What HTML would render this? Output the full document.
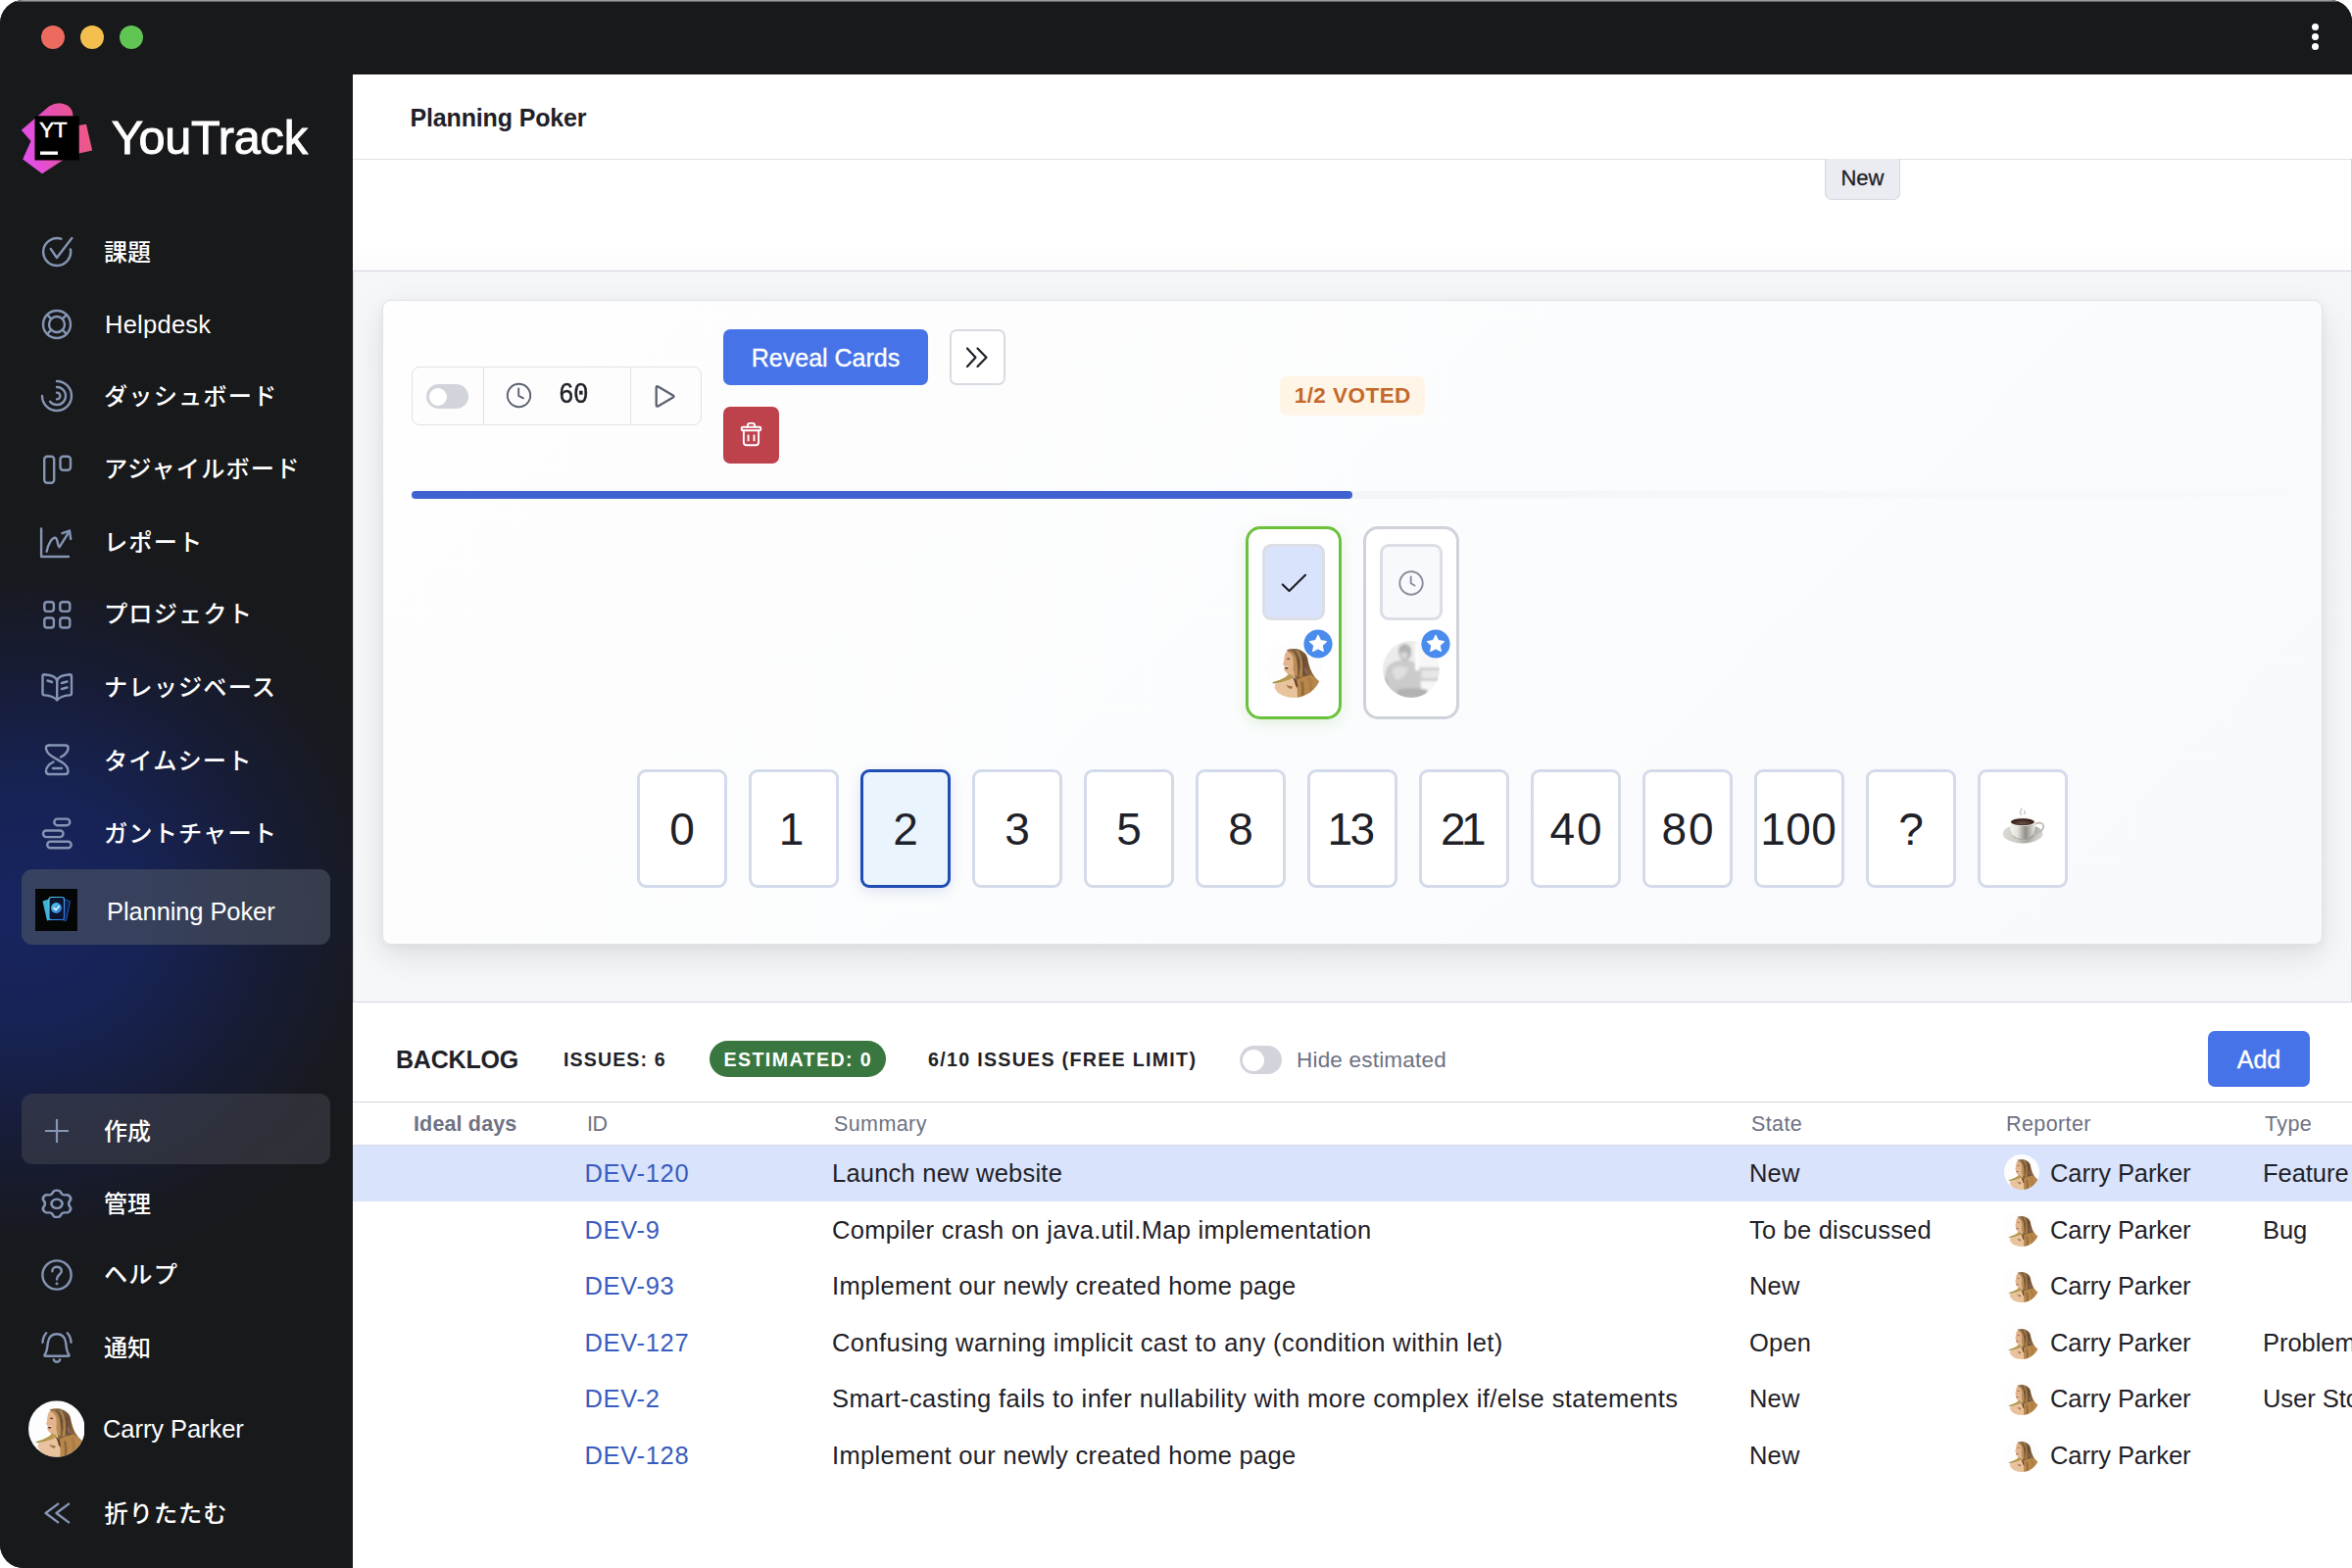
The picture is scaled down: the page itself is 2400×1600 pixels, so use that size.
<!DOCTYPE html>
<html lang="ja">
<head>
<meta charset="utf-8">
<title>Planning Poker - YouTrack</title>
<style>
*{box-sizing:border-box;margin:0;padding:0}
html,body{width:2400px;height:1600px;overflow:hidden;background:#fff}
body{font-family:"Liberation Sans","Noto Sans CJK JP",sans-serif;color:#1f2128;-webkit-font-smoothing:antialiased}
.win{position:absolute;left:0;top:0;width:2400px;height:1600px;background:#18191b;border-radius:24px 22px 0 24px;overflow:hidden;}
.win::before{content:'';position:absolute;left:0;top:0;width:100%;height:2px;background:linear-gradient(180deg,#b0b0b0 0%,#8a8a8a 50%,#3a3a3c 100%);z-index:9}
.titlebar{position:absolute;left:0;top:0;width:2400px;height:76px;background:#18191b}
.tl{position:absolute;top:26px;width:24px;height:24px;border-radius:50%}
.kebab{position:absolute;left:2358px;top:24px;width:8px}
.kebab i{display:block;width:7px;height:7px;border-radius:50%;background:#fff;margin:0 0 3px 0.5px}
.abs{position:absolute}
.side{position:absolute;left:0;top:76px;width:360px;height:1524px;background:#18191b;overflow:hidden}
.side .glow{position:absolute;left:-410px;top:440px;width:870px;height:820px;background:radial-gradient(closest-side,rgba(23,37,100,.95) 0%,rgba(23,36,94,.85) 30%,rgba(22,31,76,.5) 60%,rgba(22,27,50,.18) 82%,rgba(24,25,27,0) 100%)}
.nav{position:absolute;left:107px;height:32px;line-height:32px;font-size:24.6px;font-weight:500;color:#fff;white-space:nowrap}
.ico{position:absolute;left:41.5px;width:32px;height:32px;overflow:visible}
.ico *{fill:none;stroke:#8595b3;stroke-width:2.4;stroke-linecap:round;stroke-linejoin:round}
.hl{position:absolute;left:22px;width:315px;border-radius:11px;background:rgba(255,255,255,.13)}
.main{position:absolute;left:360px;top:76px;width:2040px;height:1524px;background:#fff;overflow:hidden}
.main .in{position:absolute;left:-360px;top:-76px;width:2400px;height:1600px}
.hline{position:absolute;left:360px;width:2040px;height:1px}
.gray{position:absolute;left:360px;top:277px;width:2040px;height:745px;background:linear-gradient(180deg,#f5f6f8 0%,#f6f7f9 100%);border-left:1px solid #d9dbe3}
.pcard{position:absolute;left:390px;top:306px;width:1980px;height:658px;border:1px solid #e1e3ea;border-radius:9px;background:linear-gradient(135deg,#fefefe 0%,#fbfcfd 50%,#f8f9fc 100%);box-shadow:0 12px 32px rgba(22,24,34,.10),0 3px 8px rgba(22,24,34,.04)}
.btn{position:absolute;border-radius:7px;color:#fff;text-align:center;white-space:nowrap}
.card{position:absolute;top:785px;width:92px;height:121px;border:3px solid #d3dbea;border-radius:9px;background:#fff;text-align:center;font-size:46px;line-height:116px;color:#1f2128;letter-spacing:0}
.card.sel{border-color:#1f4db3;background:#e9f4fd;box-shadow:0 4px 14px rgba(40,80,180,.14)}
.bl{position:absolute;white-space:nowrap}
.cap{font-weight:700;color:#1f2128;letter-spacing:1.2px}
.th{position:absolute;top:1132px;font-size:21.5px;letter-spacing:0.4px;line-height:30px;color:#6e7283;white-space:nowrap}
.row{position:absolute;left:360px;width:2040px;height:57px}
.td{position:absolute;font-size:25.5px;letter-spacing:0.2px;line-height:34px;color:#1f2128;white-space:nowrap}
.td.id{color:#3a5cc0}
.nav.kj{font-size:24px}
.nav.kt{font-size:24.2px;letter-spacing:1.3px}
.nav.kj,.nav.kt{margin-top:-0.7px;margin-left:-1px}
.nav.kt{letter-spacing:1.15px}

</style>
</head>
<body>
<div class="win">
<div class="titlebar">
  <span class="tl" style="left:42px;background:#ed6a5e"></span>
  <span class="tl" style="left:82px;background:#f5bf4f"></span>
  <span class="tl" style="left:122px;background:#61c554"></span>
  <span class="kebab"><i></i><i></i><i></i></span>
</div>
<div class="side">
<div class="glow"></div>
<div id="sb" style="position:absolute;left:0;top:-76px;width:360px;height:1600px">
<!-- logo -->
<svg class="abs" style="left:20px;top:102px" width="78" height="78" viewBox="0 0 78 78">
  <defs><linearGradient id="lg1" x1="0" y1="0.6" x2="1" y2="0.4"><stop offset="0" stop-color="#e24ef0"/><stop offset="0.55" stop-color="#e650a8"/><stop offset="1" stop-color="#ee5a80"/></linearGradient></defs>
  <path d="M1.8 30.8 L30 6.5 Q40.5 0.5 49.5 6 Q56 11 54 20 L54 27 L68 24.8 L74.2 51.5 L60.7 54.5 L44 61.5 L23 75.2 L3.2 60.5 L11.5 42 Z" fill="url(#lg1)"/>
  <rect x="15.5" y="16.3" width="45.2" height="45.2" fill="#000"/>
  <rect x="21" y="52.5" width="18" height="3.4" fill="#fff"/>
  <text x="20.2" y="37.6" font-family="Liberation Sans, sans-serif" font-size="22.5" fill="#fff" stroke="#fff" stroke-width="0.55" letter-spacing="-0.4">YT</text>
</svg>
<div class="abs" style="left:113.7px;top:109.8px;font-size:48.5px;line-height:60px;color:#fff;letter-spacing:-0.15px;-webkit-text-stroke:1px #fff">YouTrack</div>

<!-- nav icons -->
<svg class="ico" style="top:241px" viewBox="0 0 32 32"><path d="M20.4 2.7A14 14 0 1 0 29.9 13.4"/><path d="M9.7 12.9L16 22L31.3 2"/></svg>
<div class="nav kj" style="top:242.5px">課題</div>

<svg class="ico" style="top:315px" viewBox="0 0 32 32"><circle cx="16" cy="16" r="14"/><circle cx="16" cy="16" r="8"/><path d="M6.1 6.1L10.3 10.3M25.9 6.1L21.7 10.3M6.1 25.9L10.3 21.7M25.9 25.9L21.7 21.7"/></svg>
<div class="nav" style="top:315px;font-size:25.5px;font-weight:400;letter-spacing:0.25px">Helpdesk</div>

<svg class="ico" style="top:388px" viewBox="0 0 32 32"><path d="M16 1A15 15 0 1 1 1 16"/><path d="M16 7A9 9 0 1 1 9 21.7"/><path d="M16 12.6A3.4 3.4 0 0 1 16 19.4"/></svg>
<div class="nav kt" style="top:389.5px">ダッシュボード</div>

<svg class="ico" style="top:463px" viewBox="0 0 32 32"><rect x="3.2" y="2.7" width="10" height="27" rx="3"/><rect x="19.5" y="2.7" width="10.5" height="14" rx="3"/></svg>
<div class="nav kt" style="top:463.6px">アジャイルボード</div>

<svg class="ico" style="top:537px;left:40.3px" viewBox="0 0 32 32"><path d="M2.1 2.5V31H30"/><path d="M7.6 25.8C9 18 13 11.5 16.3 11.8C19.5 12.3 18 19.5 20.5 21.3L31 4.8"/><path d="M23.5 7.2L31 4.6L32.2 13"/></svg>
<div class="nav kt" style="top:538.8px">レポート</div>

<svg class="ico" style="top:611px" viewBox="0 0 32 32"><rect x="3.3" y="3.3" width="9.6" height="9.6" rx="2.8"/><rect x="19.3" y="3.3" width="10" height="9.6" rx="2.8"/><rect x="3.3" y="19.5" width="9.6" height="10" rx="2.8"/><rect x="19.3" y="19.5" width="10" height="10" rx="2.8"/></svg>
<div class="nav kt" style="top:612.1px">プロジェクト</div>

<svg class="ico" style="top:685px" viewBox="0 0 32 32"><path d="M16.2 29V10.5C16.2 5.5 10 3.8 3.3 3.2Q1.5 3.2 1.5 5V22.5Q1.5 24.3 3.3 24.4C9 24.8 13.5 26 16.2 29.5C19 26 23.5 24.8 29.2 24.4Q31 24.3 31 22.5V5Q31 3.2 29.2 3.2C22.5 3.8 16.2 5.5 16.2 10.5"/><path d="M6.5 9.5L11 11M21 12L26.5 10.5M21 18L26.5 16.5"/></svg>
<div class="nav kt" style="top:687.1px">ナレッジベース</div>

<svg class="ico" style="top:759px" viewBox="0 0 32 32"><path d="M8 1.5H24.5Q28 1.5 27.5 5C27 9 24 11.5 20 13.5"/><path d="M8 1.5Q4.5 1.5 5 5C6 12 15 14.5 21.5 19C26 22 27.5 25 27.5 28Q27.5 31 24.5 31H8Q5 31 5 28C5 24 7.5 21 12.5 18.5"/><path d="M12 25H21"/></svg>
<div class="nav kt" style="top:761.2px">タイムシート</div>

<svg class="ico" style="top:833px" viewBox="0 0 32 32"><rect x="13.3" y="2.6" width="16" height="6.6" rx="3.3"/><rect x="2" y="14.5" width="20.5" height="6.6" rx="3.3"/><rect x="6.2" y="25.7" width="24.5" height="6.6" rx="3.3"/></svg>
<div class="nav kt" style="top:836.1px">ガントチャート</div>

<div class="hl" style="top:887px;height:77px;background:rgba(77,85,98,.6)"></div>
<svg class="abs" style="left:36px;top:907px" width="43" height="43" viewBox="0 0 43 43">
  <defs><linearGradient id="pg1" x1="0" y1="0" x2="1" y2="1"><stop offset="0" stop-color="#52d6e8"/><stop offset="1" stop-color="#2f6fe0"/></linearGradient></defs>
  <rect width="43" height="43" fill="#050707"/>
  <path d="M7.5 12.5L14 10.5L18 31L12 32.5Z" fill="#3fb4d8"/>
  <path d="M29 10.5L35.5 12.8L31.5 32.5L25 31Z" fill="#0e1f4a" stroke="#2e66d8" stroke-width="0.8"/>
  <rect x="14" y="8.5" width="15.5" height="23" rx="2.2" fill="#0a1430" stroke="url(#pg1)" stroke-width="1.2"/>
  <circle cx="21.5" cy="19.5" r="5.4" fill="url(#pg1)"/>
  <path d="M19 19.6L21 21.6L24.4 17.8" fill="none" stroke="#fff" stroke-width="1.4" stroke-linecap="round" stroke-linejoin="round"/>
</svg>
<div class="nav" style="top:914px;left:109px;font-size:25.5px;font-weight:400;letter-spacing:-0.1px">Planning Poker</div>

<div class="hl" style="top:1116px;height:72px;background:rgba(68,70,79,.53)"></div>
<svg class="ico" style="top:1138px" viewBox="0 0 32 32"><path d="M16 4V28M4 16H28" style="stroke-width:2.2;stroke-linecap:butt"/></svg>
<div class="nav kj" style="top:1139.9px">作成</div>

<svg class="ico" style="top:1212px" viewBox="0 0 32 32"><g transform="translate(16 16.300) scale(1.110 0.935) translate(-16 -16)"><path d="M13.2 2.2Q16 0.6 18.8 2.2L20.5 5.2Q21.2 6.3 22.6 6.4L26 6.3Q28.8 8 28.8 11.2L27.2 14.2Q26.6 16 27.2 17.8L28.8 20.8Q28.8 24 26 25.7L22.6 25.6Q21.2 25.7 20.5 26.8L18.8 29.8Q16 31.4 13.2 29.8L11.5 26.8Q10.8 25.7 9.4 25.6L6 25.7Q3.2 24 3.2 20.8L4.8 17.8Q5.4 16 4.8 14.2L3.2 11.2Q3.2 8 6 6.3L9.4 6.4Q10.8 6.3 11.5 5.2Z"/><circle cx="16" cy="16" r="5"/></g></svg>
<div class="nav kj" style="top:1213.9px">管理</div>

<svg class="ico" style="top:1285px" viewBox="0 0 32 32"><circle cx="16" cy="16" r="14.6"/><path d="M11.3 12.2C11.3 6.3 20.8 6.3 20.8 12C20.8 15.6 16 15.6 16 20.4"/><circle cx="16" cy="24.8" r="0.6" style="stroke-width:1.8"/></svg>
<div class="nav kt" style="top:1285.8px">ヘルプ</div>

<svg class="ico" style="top:1359px" viewBox="0 0 32 32"><path d="M3.500 23.500C6.500 20 6 15.500 7 10.500C8 5 11.500 2.300 16 2.300C20.500 2.300 24 5 25 10.500C26 15.500 25.500 20 28.500 23.500Q29 24.800 27.500 24.800H4.500Q3 24.800 3.500 23.500Z"/><path d="M12.800 28.300A3.300 3.300 0 0 0 19.200 28.300"/><path d="M5.200 1.200Q1.800 5 1.500 10.800M26.800 1.200Q30.200 5 30.500 10.800"/></svg>
<div class="nav kj" style="top:1360.9px">通知</div>

<!-- avatar -->
<svg width="0" height="0" style="position:absolute"><defs>
<clipPath id="avc"><circle cx="29" cy="29" r="29"/></clipPath>
<g id="avatar" clip-path="url(#avc)">
  <rect width="58" height="58" fill="#fdfdfd"/>
  <g filter="url(#avb)">
  <path d="M21.8 9.2Q27 7.4 32.5 8.3Q38 9.6 41.4 13.6Q43.6 17 44 21.7Q45 26 46.6 29.8Q48 33.5 50.7 36.9Q53 39.5 56 42L50 54L42.5 58H31L30.5 47Q29.5 42 30.1 36.9Q31.5 31 31.1 26.8Q31 21 29 16.7Q27 13 23.9 11.6Z" fill="url(#avh)"/>
  <path d="M36 16Q41 18 42.5 26Q44 33 47 38Q42 40 38.5 34Q36 28 36 16Z" fill="#6f4e36" opacity=".85"/>
  <path d="M40.500 26Q43.500 29 44.500 34Q41.500 35 40 31Z" fill="#8d6b66" opacity=".8"/>
  <path d="M21.600 10.800Q19.900 13.500 19.600 16.500Q19.200 19.500 19 21.700L18 23.900L19.600 25.500L19.400 28.900Q19.800 30.800 21.300 31.900Q22.500 33.600 24.200 34.300Q27.500 35.500 30.300 34.800Q31.800 30.500 31.500 26.500Q31.300 21.500 30 16.700Q28.500 13 25.500 11.300Q23.500 10.300 21.600 10.800Z" fill="#e4b48e"/>
  <path d="M22.500 11Q27 12.500 28.300 17Q29.500 23 28.500 29Q30 33 29.500 35.500L33 36Q33.500 28 32.500 21Q31.500 14 27 10.500Q24.500 9.800 22.500 11Z" fill="#b98d58"/>
  <ellipse cx="23.700" cy="18.300" rx="1.700" ry="0.800" fill="#5f4232"/>
  <path d="M19.600 25.700L24.200 25.900L23.900 26.800L19.800 26.700Z" fill="#fffaf4"/>
  <path d="M20 26.800L23.800 26.900Q23.300 28.800 21.300 28.700Q20.200 28.300 20 26.800Z" fill="#5a3324"/>
  <path d="M10.400 43.200Q14 40.200 19.700 38Q24 36.300 27.500 36.600Q31 37.500 32.500 40L33 58H18Q13 54 9.500 48Z" fill="#e8c39e"/>
  <path d="M24.200 33.600Q27 35.200 30.500 35.700L25 39.500Q17 42.300 8 43.400L7.600 42.300Q15 40.200 19.500 37.500Q22.500 35.800 24.200 33.600Z" fill="url(#avs)"/>
  <path d="M27.500 37Q31.500 38 33.500 41.500Q34.500 45 33 48Q30.500 46 30.200 42.500Q29.500 39.500 27.500 37Z" fill="#6a4326"/>
  <path d="M21.500 44.500Q24.500 46.500 27.500 46Q28.500 48 26.500 49Q23 48.500 21.500 44.500Z" fill="#a8744a"/>
  <path d="M32 40Q38 36.500 46 34.500Q51 38 56 42L50 54L42 58H32.500Q34.500 49 32 40Z" fill="#b8874b"/>
  <path d="M36 42Q38 48 36.500 57L39 57.500Q41 49 38.500 41Z" fill="#8a5f36" opacity=".8"/>
  <path d="M43 38Q46.500 44 44.500 55L47.500 53Q49.500 45 46 37Z" fill="#a87a44" opacity=".8"/>
  <path d="M33.500 10Q37 14 38 22Q39 30 37 37L35 36.500Q36.500 28 35.500 20Q34.500 13.500 31.500 10Z" fill="#c49c62" opacity=".7"/>
  </g>
</g>
<linearGradient id="avh" x1="0" y1="0" x2="0.300" y2="1"><stop offset="0" stop-color="#8c6a44"/><stop offset="0.350" stop-color="#6e4f32"/><stop offset="0.650" stop-color="#8a6438"/><stop offset="1" stop-color="#b98a50"/></linearGradient>
<linearGradient id="avs" x1="1" y1="0" x2="0" y2="1"><stop offset="0" stop-color="#c29a52"/><stop offset="0.600" stop-color="#b3994c"/><stop offset="1" stop-color="#8f8a3c"/></linearGradient>
<filter id="avb" x="-10%" y="-10%" width="120%" height="120%"><feGaussianBlur stdDeviation="0.550"/></filter>
</defs></svg>
<svg class="abs" style="left:28.800px;top:1429px" width="57.600" height="58" viewBox="0 0 58 58"><use href="#avatar"/></svg>
<div class="nav" style="top:1442px;left:105px;font-size:25.5px;font-weight:400;letter-spacing:-0.07px">Carry Parker</div>

<svg class="ico" style="top:1528px;left:44px" viewBox="0 0 32 32"><path d="M15.200 6.600L2.600 16L15.200 25.400M26.100 6.600L13.500 16L26.100 25.400"/></svg>
<div class="nav kt" style="top:1530.1px;left:107.5px;letter-spacing:1px">折りたたむ</div>
</div>
</div>

<div class="main"><div class="in">
<div class="abs" style="left:418.500px;top:102.600px;font-size:25px;line-height:34px;font-weight:700;letter-spacing:-0.15px;color:#1f2128;white-space:nowrap">Planning Poker</div>
<div class="hline" style="top:162px;background:#dfe1e8"></div>
<div class="abs" style="left:1862px;top:162px;width:77px;height:42px;background:#ebecf1;border:1px solid #d6d8e0;border-top:none;border-radius:0 0 7px 7px;text-align:center;font-size:22px;line-height:40px;-webkit-text-stroke:0.3px #1f2128;color:#1f2128">New</div>
<div class="abs" style="left:360px;top:250px;width:2040px;height:26px;background:linear-gradient(180deg,rgba(246,247,249,0),rgba(246,247,249,.4))"></div>
<div class="hline" style="top:276px;background:#d3d5de"></div>
<div class="gray"></div>
<div class="abs" style="left:2399px;top:162px;width:1px;height:861px;background:#cfd1d9"></div>
<div class="pcard"></div>

<!-- timer group -->
<div class="abs" style="left:420px;top:374px;width:296px;height:60px;border:1px solid #e0e2e8;border-radius:8px;background:#fdfdfe"></div>
<div class="abs" style="left:493px;top:375px;width:1px;height:58px;background:#e0e2e8"></div>
<div class="abs" style="left:643px;top:375px;width:1px;height:58px;background:#e0e2e8"></div>
<div class="abs" style="left:435px;top:392px;width:43px;height:25px;border-radius:13px;background:#d2d4db"></div>
<div class="abs" style="left:438px;top:396px;width:18px;height:18px;border-radius:50%;background:#fff"></div>
<svg class="abs" style="left:516px;top:390px" width="27" height="27" viewBox="0 0 27 27"><circle cx="13.500" cy="13.500" r="11.700" fill="none" stroke="#5d6272" stroke-width="1.900"/><path d="M13.200 6.500V13.800L18 16.300" fill="none" stroke="#5d6272" stroke-width="1.900" stroke-linecap="round" stroke-linejoin="round"/></svg>
<div class="abs" style="left:570px;top:386px;font-family:'Liberation Mono','DejaVu Sans Mono',monospace;font-size:26px;line-height:34px;color:#1f2128;letter-spacing:-0.500px;-webkit-text-stroke:0.4px #1f2128;transform:scaleY(1.1);transform-origin:50% 55%">60</div>
<svg class="abs" style="left:666px;top:390px" width="26" height="30" viewBox="0 0 26 30"><path d="M3.700 5.600Q3.700 3.600 5.500 4.500L20.800 13.400Q22.300 14.450 20.800 15.500L5.500 24.400Q3.700 25.300 3.700 23.300Z" fill="none" stroke="#5d6272" stroke-width="2.300" stroke-linejoin="round"/></svg>

<div class="btn" style="left:738px;top:336px;width:209px;height:57px;background:#4673e8;font-size:25px;line-height:59px;-webkit-text-stroke:0.35px #fff">Reveal Cards</div>
<div class="btn" style="left:969px;top:336px;width:57px;height:57px;background:#fff;border:2px solid #d9dbe3"></div>
<svg class="abs" style="left:984px;top:351px" width="28" height="28" viewBox="0 0 28 28"><path d="M3 4.500L11.500 13.700L3 23M13.500 4.500L22.500 13.700L13.500 23" fill="none" stroke="#1f2128" stroke-width="2.200" stroke-linecap="round" stroke-linejoin="round"/></svg>
<div class="btn" style="left:738px;top:415px;width:57px;height:58px;background:#be424c"></div>
<svg class="abs" style="left:753px;top:429px" width="28" height="30" viewBox="0 0 28 30"><g fill="none" stroke="#fff" stroke-width="1.900" stroke-linecap="round" stroke-linejoin="round"><rect x="3.700" y="6.800" width="19.600" height="3.500" rx="1.300"/><path d="M9.800 6.800V5.400Q9.800 2.900 12.300 2.900H14.700Q17.200 2.900 17.200 5.400V6.800"/><path d="M5.900 10.300V22.300Q5.900 25.300 8.900 25.300H18.100Q21.100 25.300 21.100 22.300V10.300"/><path d="M10.600 14.600V21.200M16.500 14.600V21.200" stroke-linecap="butt"/></g></svg>

<div class="abs" style="left:1306px;top:384px;width:148px;height:40px;border-radius:7px;background:#fef5e7;color:#c4692a;font-weight:700;font-size:22.5px;line-height:40px;text-align:center;letter-spacing:0.45px;text-indent:0.5px;white-space:nowrap">1/2 VOTED</div>

<!-- progress -->
<div class="abs" style="left:420px;top:501px;width:1920px;height:8px;border-radius:4px;background:linear-gradient(90deg,#f4f5f8 50%,rgba(247,248,250,.3) 100%)"></div>
<div class="abs" style="left:420px;top:501px;width:960px;height:8px;border-radius:4px;background:#3f62d0"></div>

<!-- players -->
<div class="abs" style="left:1271px;top:537px;width:98px;height:197px;border:3px solid #6cc13c;border-radius:15px;background:#fff;box-shadow:0 4px 14px rgba(90,180,60,.16)"></div>
<div class="abs" style="left:1288px;top:555px;width:64px;height:78px;border:3px solid #dcdee6;border-radius:9px;background:#d9e3fc"></div>
<svg class="abs" style="left:1305px;top:582px" width="30" height="26" viewBox="0 0 30 26"><path d="M3.800 14.500L10.500 21L27 4.800" fill="none" stroke="#1f2128" stroke-width="2.200" stroke-linecap="round" stroke-linejoin="round"/></svg>
<div class="abs" style="left:1391px;top:537px;width:98px;height:197px;border:3px solid #cfd1db;border-radius:15px;background:#fff"></div>
<div class="abs" style="left:1408px;top:555px;width:64px;height:78px;border:3px solid #dcdee6;border-radius:9px;background:#f8f9fc"></div>
<svg class="abs" style="left:1426.400px;top:581.100px" width="28" height="28" viewBox="0 0 28 28"><circle cx="14" cy="14" r="11.700" fill="none" stroke="#8a8e9c" stroke-width="1.900"/><path d="M13.700 7.500V14.300L17.500 16.500" fill="none" stroke="#8a8e9c" stroke-width="1.900" stroke-linecap="round" stroke-linejoin="round"/></svg>

<svg class="abs" style="left:1291px;top:654px" width="58" height="58" viewBox="0 0 58 58"><use href="#avatar"/></svg>
<svg class="abs" style="left:1411px;top:654px" width="58" height="58" viewBox="0 0 58 58">
  <defs><clipPath id="avc3"><circle cx="29" cy="29" r="29"/></clipPath><filter id="bl" x="-20%" y="-20%" width="140%" height="140%"><feGaussianBlur stdDeviation="1.300"/></filter></defs>
  <g clip-path="url(#avc3)"><g filter="url(#bl)">
  <rect x="-8" y="-8" width="74" height="74" fill="#ececec"/>
  <rect x="34" y="-8" width="32" height="74" fill="#f7f7f7"/>
  <path d="M3 30Q6 22 16 20Q22 18 30 21Q37 23 38 32L40 62H0Z" fill="#cbcbcb"/>
  <path d="M16 8Q20 1 26 4Q30 7 29 14Q27 20 22 20Q16 19 16 8Z" fill="#b4b4b4"/>
  <path d="M18 12Q22 10 26 13Q26 18 22 19Q18 18 18 12Z" fill="#d6d6d6"/>
  <path d="M10 28Q18 24 26 28Q24 38 14 40Q9 36 10 28Z" fill="#dedede"/>
  <path d="M37 27H58V41H37Z" fill="#d0d0d0"/>
  <path d="M40 30H58V38H40Z" fill="#e6e6e6"/>
  <path d="M33 2H37V30H33Z" fill="#fdfdfd"/>
  <path d="M14 50Q28 46 46 50L44 56Q28 60 16 56Z" fill="#b2b2b2"/>
  <path d="M2 36Q6 40 5 48L0 50Z" fill="#b9b9b9"/>
  </g></g>
</svg>
<svg class="abs" style="left:1330.300px;top:642.200px" width="30" height="30" viewBox="0 0 30 30"><circle cx="15" cy="15" r="14.600" fill="#4a8bee"/><path d="M15 6.300L17.600 11.700L23.500 12.500L19.200 16.600L20.300 22.500L15 19.600L9.700 22.500L10.800 16.600L6.500 12.500L12.400 11.700Z" fill="#fff" stroke="#fff" stroke-width="1.200" stroke-linejoin="round"/></svg>
<svg class="abs" style="left:1450.300px;top:642.200px" width="30" height="30" viewBox="0 0 30 30"><circle cx="15" cy="15" r="14.600" fill="#4a8bee"/><path d="M15 6.300L17.600 11.700L23.500 12.500L19.200 16.600L20.300 22.500L15 19.600L9.700 22.500L10.800 16.600L6.500 12.500L12.400 11.700Z" fill="#fff" stroke="#fff" stroke-width="1.200" stroke-linejoin="round"/></svg>

<!-- cards -->
<div class="card" style="left:650px">0</div>
<div class="card" style="left:764px;text-indent:-5px">1</div>
<div class="card sel" style="left:878px">2</div>
<div class="card" style="left:992px">3</div>
<div class="card" style="left:1106px">5</div>
<div class="card" style="left:1220px">8</div>
<div class="card" style="left:1334px;letter-spacing:-2.5px;text-indent:-5px">13</div>
<div class="card" style="left:1448px;letter-spacing:-4.500px;text-indent:-6px">21</div>
<div class="card" style="left:1562px;letter-spacing:2px;text-indent:2px">40</div>
<div class="card" style="left:1676px;letter-spacing:2px;text-indent:2px">80</div>
<div class="card" style="left:1790px;letter-spacing:0.450px;text-indent:-1.500px">100</div>
<div class="card" style="left:1904px">?</div>
<div class="card" style="left:2018px"><svg style="position:absolute;left:22px;top:34px" width="46" height="42" viewBox="0 0 46 42" role="img" aria-label="☕"><title>☕</title>
  <defs>
    <linearGradient id="cupg" x1="0" y1="0" x2="1" y2="0"><stop offset="0" stop-color="#f6f5f1"/><stop offset="0.300" stop-color="#e4e2dd"/><stop offset="0.620" stop-color="#8f8d88"/><stop offset="0.850" stop-color="#c9c7c2"/><stop offset="1" stop-color="#efeee9"/></linearGradient>
    <linearGradient id="saug" x1="0" y1="0" x2="1" y2="0.300"><stop offset="0" stop-color="#dddbd5"/><stop offset="0.550" stop-color="#cfcdc7"/><stop offset="0.800" stop-color="#a7a5a0"/><stop offset="1" stop-color="#d2d0ca"/></linearGradient>
    <radialGradient id="cofg" cx="0.500" cy="0.650" r="0.600"><stop offset="0" stop-color="#6a5046"/><stop offset="0.600" stop-color="#46302a"/><stop offset="1" stop-color="#25130c"/></radialGradient>
    <filter id="cfb" x="-10%" y="-10%" width="120%" height="120%"><feGaussianBlur stdDeviation="0.350"/></filter>
    <filter id="stb" x="-50%" y="-50%" width="200%" height="200%"><feGaussianBlur stdDeviation="0.700"/></filter>
  </defs>
  <g filter="url(#cfb)">
  <ellipse cx="21.100" cy="28.700" rx="20.300" ry="9.700" fill="url(#saug)"/>
  <ellipse cx="21.500" cy="31" rx="10.500" ry="4" fill="#9a9893" opacity=".55"/>
  <path d="M34.200 18.600Q40.500 16 42.300 20.500Q42.800 25.500 34.600 28.400" fill="none" stroke="#b9b7b2" stroke-width="1.700" stroke-linecap="round"/>
  <path d="M7.700 16.300Q7.200 27 12.500 31.500Q16 34 21 34Q26 34 29.500 31.500Q34.600 27 34.100 16.300Z" fill="url(#cupg)"/>
  <ellipse cx="20.900" cy="16.300" rx="13.200" ry="4.800" fill="#f4f3ef"/>
  <ellipse cx="20.900" cy="16.800" rx="12" ry="3.500" fill="url(#cofg)"/>
  </g>
  <g filter="url(#stb)" fill="none" stroke="#bdbdbd" stroke-width="1.300" stroke-linecap="round" opacity=".85"><path d="M19.600 9.500Q17.500 7.500 19 5.500Q20.500 4 19.300 3"/><path d="M22.500 8.500Q24 6.800 22.800 5.200"/></g>
</svg></div>

<div class="hline" style="top:1022px;background:#d3d5de"></div>
</div></div>

<div class="main" style="background:none"><div class="in">
<div class="abs" style="left:360px;top:1023px;width:2040px;height:577px;background:#fff"></div>
<div class="bl cap" style="left:404px;top:1064px;font-size:25px;line-height:34px;letter-spacing:-0.2px">BACKLOG</div>
<div class="bl cap" style="left:575px;top:1065.6px;font-size:19.6px;line-height:30px;letter-spacing:1.1px">ISSUES: 6</div>
<div class="bl cap" style="left:724px;top:1062px;width:180px;height:37px;border-radius:19px;background:#3a7740;color:#fff;font-size:19.6px;line-height:38px;text-align:center;letter-spacing:1.42px;text-indent:0.6px">ESTIMATED: 0</div>
<div class="bl cap" style="left:947px;top:1065.6px;font-size:19.6px;line-height:30px;letter-spacing:1.31px">6/10 ISSUES (FREE LIMIT)</div>
<div class="abs" style="left:1265px;top:1067px;width:43px;height:29px;border-radius:15px;background:#d2d4db"></div>
<div class="abs" style="left:1268.300px;top:1070.500px;width:22px;height:22px;border-radius:50%;background:#fff"></div>
<div class="bl" style="left:1323px;top:1066px;font-size:22.5px;letter-spacing:0.2px;line-height:32px;color:#6e7283">Hide estimated</div>
<div class="btn" style="left:2253px;top:1052px;width:104px;height:57px;background:#4673e8;font-size:25px;line-height:59.5px;-webkit-text-stroke:0.35px #fff">Add</div>
<div class="hline" style="top:1124px;background:#d3d5de"></div>
<div class="th" style="left:422px;font-weight:700;letter-spacing:0.15px">Ideal days</div>
<div class="th" style="left:599px;letter-spacing:-0.4px">ID</div>
<div class="th" style="left:851px">Summary</div>
<div class="th" style="left:1787px">State</div>
<div class="th" style="left:2047px">Reporter</div>
<div class="th" style="left:2311px">Type</div>
<div class="hline" style="top:1168px;background:#d9dbe3"></div>
<div class="row" style="top:1169.0px;background:#d9e3fb"></div>
<div class="td id" style="left:596.4px;top:1180.3px;letter-spacing:0.7px">DEV-120</div>
<div class="td" style="left:849px;top:1180.3px;letter-spacing:0.22px">Launch new website</div>
<div class="td" style="left:1785px;top:1180.3px">New</div>
<svg class="abs" style="left:2045px;top:1178.3px" width="36" height="36" viewBox="0 0 58 58"><use href="#avatar"/></svg>
<div class="td" style="left:2092px;top:1180.3px;letter-spacing:-0.09px">Carry Parker</div>
<div class="td" style="left:2309px;top:1180.3px;letter-spacing:-0.05px">Feature</div>
<div class="td id" style="left:596.4px;top:1237.8px;letter-spacing:0.7px">DEV-9</div>
<div class="td" style="left:849px;top:1237.8px;letter-spacing:0.29px">Compiler crash on java.util.Map implementation</div>
<div class="td" style="left:1785px;top:1237.8px">To be discussed</div>
<svg class="abs" style="left:2045px;top:1235.8px" width="36" height="36" viewBox="0 0 58 58"><use href="#avatar"/></svg>
<div class="td" style="left:2092px;top:1237.8px;letter-spacing:-0.09px">Carry Parker</div>
<div class="td" style="left:2309px;top:1237.8px;letter-spacing:-0.05px">Bug</div>
<div class="td id" style="left:596.4px;top:1295.3px;letter-spacing:0.7px">DEV-93</div>
<div class="td" style="left:849px;top:1295.3px;letter-spacing:0.31px">Implement our newly created home page</div>
<div class="td" style="left:1785px;top:1295.3px">New</div>
<svg class="abs" style="left:2045px;top:1293.3px" width="36" height="36" viewBox="0 0 58 58"><use href="#avatar"/></svg>
<div class="td" style="left:2092px;top:1295.3px;letter-spacing:-0.09px">Carry Parker</div>
<div class="td id" style="left:596.4px;top:1352.8px;letter-spacing:0.7px">DEV-127</div>
<div class="td" style="left:849px;top:1352.8px;letter-spacing:0.42px">Confusing warning implicit cast to any (condition within let)</div>
<div class="td" style="left:1785px;top:1352.8px">Open</div>
<svg class="abs" style="left:2045px;top:1350.8px" width="36" height="36" viewBox="0 0 58 58"><use href="#avatar"/></svg>
<div class="td" style="left:2092px;top:1352.8px;letter-spacing:-0.09px">Carry Parker</div>
<div class="td" style="left:2309px;top:1352.8px;letter-spacing:-0.05px">Problem</div>
<div class="td id" style="left:596.4px;top:1410.3px;letter-spacing:0.7px">DEV-2</div>
<div class="td" style="left:849px;top:1410.3px;letter-spacing:0.41px">Smart-casting fails to infer nullability with more complex if/else statements</div>
<div class="td" style="left:1785px;top:1410.3px">New</div>
<svg class="abs" style="left:2045px;top:1408.3px" width="36" height="36" viewBox="0 0 58 58"><use href="#avatar"/></svg>
<div class="td" style="left:2092px;top:1410.3px;letter-spacing:-0.09px">Carry Parker</div>
<div class="td" style="left:2309px;top:1410.3px;letter-spacing:-0.05px">User Story</div>
<div class="td id" style="left:596.4px;top:1467.8px;letter-spacing:0.7px">DEV-128</div>
<div class="td" style="left:849px;top:1467.8px;letter-spacing:0.31px">Implement our newly created home page</div>
<div class="td" style="left:1785px;top:1467.8px">New</div>
<svg class="abs" style="left:2045px;top:1465.8px" width="36" height="36" viewBox="0 0 58 58"><use href="#avatar"/></svg>
<div class="td" style="left:2092px;top:1467.8px;letter-spacing:-0.09px">Carry Parker</div>
</div></div>

</div>
</body>
</html>
